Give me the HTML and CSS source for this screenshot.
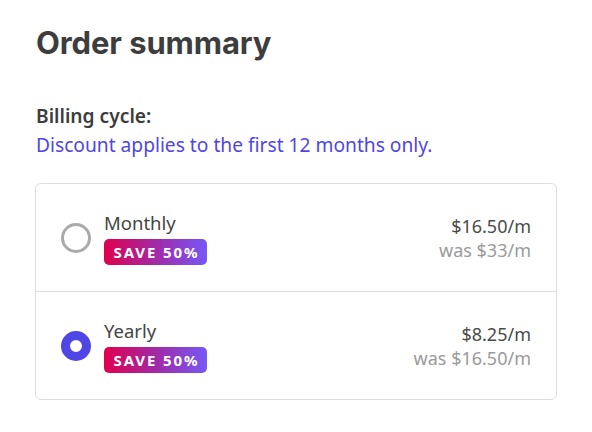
FILE: index.html
```html
<!DOCTYPE html>
<html lang="en">
<head>
<meta charset="utf-8">
<title>Order summary</title>
<link rel="stylesheet" href="styles.css">
</head>
<body>
<main class="summary">
  <h1 class="title">Order summary</h1>
  <div class="billing">
    <div class="billing-label">Billing cycle:</div>
    <div class="billing-note">Discount applies to the first 12 months only.</div>
  </div>
  <div class="options">
    <label class="option">
      <span class="radio"></span>
      <span class="info">
        <span class="name">Monthly</span>
        <span class="badge">SAVE 50%</span>
      </span>
      <span class="price">
        <span class="now">$16.50/m</span>
        <span class="was">was $33/m</span>
      </span>
    </label>
    <label class="option">
      <span class="radio checked"></span>
      <span class="info">
        <span class="name">Yearly</span>
        <span class="badge">SAVE 50%</span>
      </span>
      <span class="price">
        <span class="now">$8.25/m</span>
        <span class="was">was $16.50/m</span>
      </span>
    </label>
  </div>
</main>
</body>
</html>
```
FILE: styles.css
```css
html, body {
  margin: 0;
  padding: 0;
  background: #ffffff;
}
body {
  font-family: "Noto Sans", "Open Sans", sans-serif;
  color: #444444;
}
.summary {
  padding: 23px 35px 0 35px;
  width: 522px;
}
.title {
  margin: 0 0 0 1px;
  font-family: Inter, "Noto Sans", sans-serif;
  font-weight: 700;
  font-size: 31px;
  line-height: 40px;
  color: #3d3d3d;
  letter-spacing: -0.1px;
}
.billing {
  margin-top: 38px;
  padding-left: 1px;
}
.billing-label {
  font-size: 19.2px;
  font-weight: 600;
  line-height: 29px;
  color: #3d3d3d;
}
.billing-note {
  font-size: 19.2px;
  line-height: 29px;
  color: #4f46e5;
}
.options {
  margin-top: 24px;
  border: 1px solid #dddddd;
  border-radius: 6px;
  display: flex;
  flex-direction: column;
}
.option {
  display: flex;
  align-items: center;
  height: 107px;
  padding: 0 25px;
}
.option + .option {
  border-top: 1px solid #dddddd;
}
.radio {
  width: 30px;
  height: 30px;
  box-sizing: border-box;
  border-radius: 50%;
  border: 3px solid #aaaaaa;
  flex: none;
  margin-right: 13px;
}
.radio.checked {
  border: 9px solid #4f46e5;
}
.info {
  display: flex;
  flex-direction: column;
  align-items: flex-start;
  flex: 1;
}
.name {
  font-size: 18.5px;
  line-height: 24px;
  color: #444444;
}
.badge {
  margin-top: 4px;
  height: 26px;
  width: 103px;
  box-sizing: border-box;
  border-radius: 5px;
  background: linear-gradient(90deg, #e0004d 0%, #a12aa6 50%, #7558f7 100%);
  color: #ffffff;
  font-weight: 700;
  font-size: 15px;
  line-height: 26px;
  letter-spacing: 1.9px;
  text-indent: 2px;
  text-align: center;
}
.price {
  display: flex;
  flex-direction: column;
  align-items: flex-end;
  font-size: 18px;
  line-height: 24px;
  margin-top: 0;
}
.now {
  color: #4a4a4a;
}
.was {
  color: #9a9a9a;
}
```
